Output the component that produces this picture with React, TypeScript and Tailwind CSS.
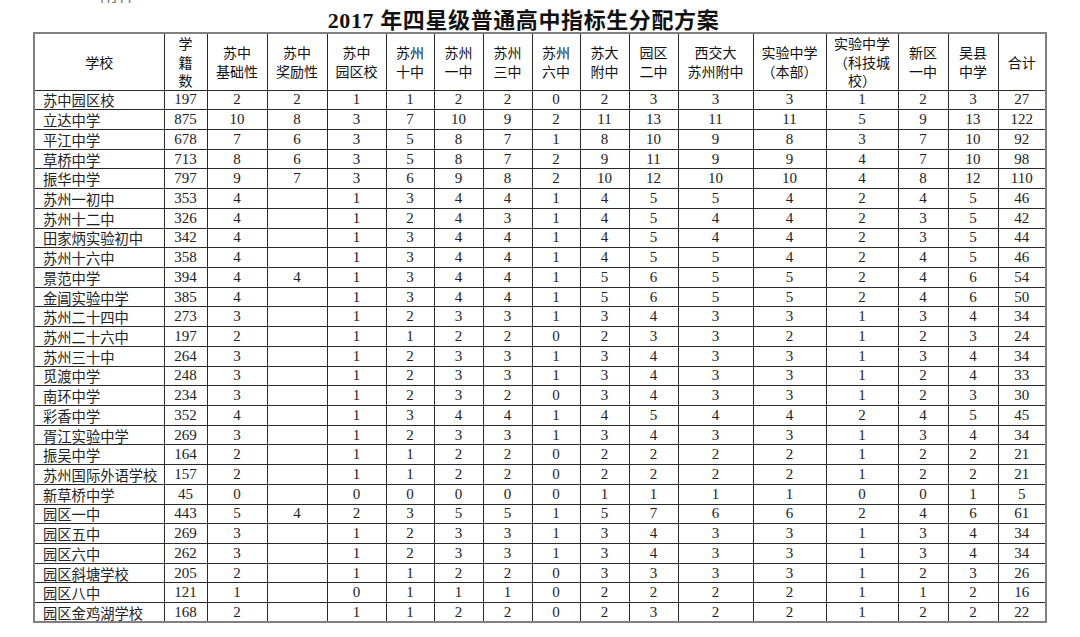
import React from "react";

const widths = [130, 43, 60, 60, 59, 48, 49, 49, 48, 49, 49, 75, 73, 72, 50, 50, 48];

const headers: string[][] = [
  ["学校"],
  ["学", "籍", "数"],
  ["苏中", "基础性"],
  ["苏中", "奖励性"],
  ["苏中", "园区校"],
  ["苏州", "十中"],
  ["苏州", "一中"],
  ["苏州", "三中"],
  ["苏州", "六中"],
  ["苏大", "附中"],
  ["园区", "二中"],
  ["西交大", "苏州附中"],
  ["实验中学", "（本部）"],
  ["实验中学", "（科技城", "校）"],
  ["新区", "一中"],
  ["吴县", "中学"],
  ["合计"],
];

const raw = `苏中园区校 197 2 2 1 1 2 2 0 2 3 3 3 1 2 3 27
立达中学 875 10 8 3 7 10 9 2 11 13 11 11 5 9 13 122
平江中学 678 7 6 3 5 8 7 1 8 10 9 8 3 7 10 92
草桥中学 713 8 6 3 5 8 7 2 9 11 9 9 4 7 10 98
振华中学 797 9 7 3 6 9 8 2 10 12 10 10 4 8 12 110
苏州一初中 353 4 _ 1 3 4 4 1 4 5 5 4 2 4 5 46
苏州十二中 326 4 _ 1 2 4 3 1 4 5 4 4 2 3 5 42
田家炳实验初中 342 4 _ 1 3 4 4 1 4 5 4 4 2 3 5 44
苏州十六中 358 4 _ 1 3 4 4 1 4 5 5 4 2 4 5 46
景范中学 394 4 4 1 3 4 4 1 5 6 5 5 2 4 6 54
金阊实验中学 385 4 _ 1 3 4 4 1 5 6 5 5 2 4 6 50
苏州二十四中 273 3 _ 1 2 3 3 1 3 4 3 3 1 3 4 34
苏州二十六中 197 2 _ 1 1 2 2 0 2 3 3 2 1 2 3 24
苏州三十中 264 3 _ 1 2 3 3 1 3 4 3 3 1 3 4 34
觅渡中学 248 3 _ 1 2 3 3 1 3 4 3 3 1 2 4 33
南环中学 234 3 _ 1 2 3 2 0 3 4 3 3 1 2 3 30
彩香中学 352 4 _ 1 3 4 4 1 4 5 4 4 2 4 5 45
胥江实验中学 269 3 _ 1 2 3 3 1 3 4 3 3 1 3 4 34
振吴中学 164 2 _ 1 1 2 2 0 2 2 2 2 1 2 2 21
苏州国际外语学校 157 2 _ 1 1 2 2 0 2 2 2 2 1 2 2 21
新草桥中学 45 0 _ 0 0 0 0 0 1 1 1 1 0 0 1 5
园区一中 443 5 4 2 3 5 5 1 5 7 6 6 2 4 6 61
园区五中 269 3 _ 1 2 3 3 1 3 4 3 3 1 3 4 34
园区六中 262 3 _ 1 2 3 3 1 3 4 3 3 1 3 4 34
园区斜塘学校 205 2 _ 1 1 2 2 0 3 3 3 3 1 2 3 26
园区八中 121 1 _ 0 1 1 1 0 2 2 2 2 1 1 2 16
园区金鸡湖学校 168 2 _ 1 1 2 2 0 2 3 2 2 1 2 2 22`;

const rows = raw.split("\n").map((l) => l.trim().split(/\s+/).map((v) => (v === "_" ? "" : v)));

export default function App() {
  return (
    <div className="w-[1080px] h-[637px] bg-white overflow-hidden text-[#1a1a1a]">
      <div className="h-[3px] overflow-hidden pl-[100px]">
        <div className="mt-[-15px] text-[18px] leading-[18px] text-[#777] font-['Noto_Sans_CJK_SC',sans-serif]">
          附件
        </div>
      </div>
      <div className="h-[29px] pt-[7px] pr-[33px] text-center text-[22px] leading-[22px] tracking-[0.6px] font-bold text-[#111] font-['Liberation_Serif','Noto_Sans_CJK_SC',serif]">
        2017 年四星级普通高中指标生分配方案
      </div>
      <table className="w-[1012px] mx-auto table-fixed border-collapse border-2 border-[#808080] font-['Liberation_Serif','Noto_Sans_CJK_SC',serif]">
        <colgroup>
          {widths.map((w, i) => (
            <col key={i} style={{ width: w }} />
          ))}
        </colgroup>
        <thead>
          <tr className="h-[57px]">
            {headers.map((h, i) => (
              <th
                key={i}
                className="border border-[#2a2a2a] p-0 text-center align-middle font-normal text-[14px] leading-[18.5px] text-[#111] font-['Noto_Sans_CJK_SC',sans-serif]"
              >
                {h.map((line, j) => (
                  <div key={j} className="whitespace-nowrap">
                    {line}
                  </div>
                ))}
              </th>
            ))}
          </tr>
        </thead>
        <tbody>
          {rows.map((r, i) => (
            <tr key={i} className="h-[19.72px]">
              {r.map((v, j) =>
                j === 0 ? (
                  <td
                    key={j}
                    className="border border-[#2a2a2a] p-0 pl-[8px] text-left align-middle text-[14.3px] leading-[17px] whitespace-nowrap font-['Noto_Sans_CJK_SC',sans-serif] text-[#222]"
                  >
                    {v}
                  </td>
                ) : (
                  <td
                    key={j}
                    className="border border-[#2a2a2a] p-0 text-center align-middle text-[15px] leading-[17px] text-[#222] font-['Liberation_Serif',serif]"
                  >
                    {v}
                  </td>
                )
              )}
            </tr>
          ))}
        </tbody>
      </table>
    </div>
  );
}
